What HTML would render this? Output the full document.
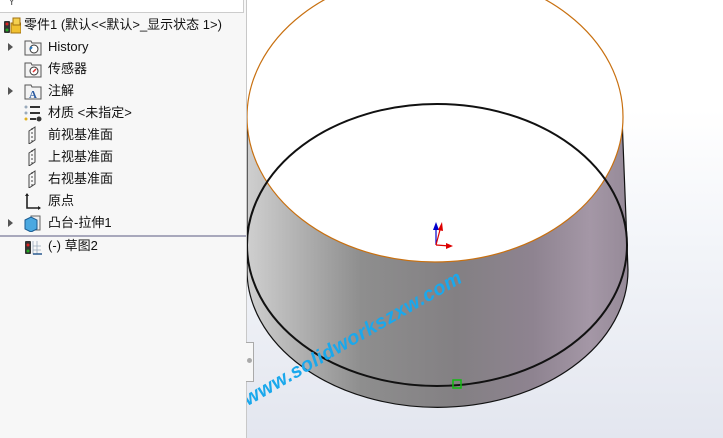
<!DOCTYPE html>
<html><head><meta charset="utf-8"><style>
html,body{margin:0;padding:0;width:723px;height:438px;overflow:hidden;background:#fff}
#panel{position:absolute;left:0;top:0;width:246px;height:438px;background:#f7f7f7;border-right:1px solid #c8c8c8;font-family:"Liberation Sans","Noto Sans CJK SC",sans-serif;font-size:13px;color:#111}
.row{position:absolute;left:0;height:20px;line-height:20px;white-space:nowrap}
.arr{position:absolute;left:8px;top:6px;width:0;height:0;border-left:5px solid #555;border-top:4px solid transparent;border-bottom:4px solid transparent}
.ic{position:absolute;left:24px;top:1px;width:18px;height:18px}
.tx{position:absolute;left:48px}
#filter{position:absolute;left:0;top:0;width:243px;height:12px;border-bottom:1px solid #ccc;border-right:1px solid #ccc;background:#fff}
#sep{position:absolute;left:0;top:235px;width:246px;height:2px;background:#a8a8bc}
#view{position:absolute;left:247px;top:0;width:476px;height:438px;background:linear-gradient(#ffffff 0%,#ffffff 25%,#f3f5f9 55%,#e3e6ef 100%)}
</style></head><body>
<div id="view"></div>
<svg style="position:absolute;left:0;top:0" width="723" height="438">
<defs><linearGradient id="g" x1="247" x2="628" y1="0" y2="0" gradientUnits="userSpaceOnUse">
<stop offset="0" stop-color="#cfcfcf"/><stop offset="0.3" stop-color="#8e8e8e"/><stop offset="0.55" stop-color="#838083"/><stop offset="0.75" stop-color="#8e8390"/><stop offset="0.9" stop-color="#a497a6"/><stop offset="1" stop-color="#968a98"/></linearGradient></defs>
<path d="M247,117 L247,270 A190,137 0 0 0 628,270 L622,117 A188,145 0 0 1 247,117 Z" fill="url(#g)" stroke="#111" stroke-width="1.2"/>
<ellipse cx="435" cy="117" rx="188" ry="145" fill="#fff" stroke="#c87010" stroke-width="1.2"/>
<ellipse cx="437" cy="245" rx="190" ry="141" fill="none" stroke="#111" stroke-width="2"/>
<rect x="453" y="380" width="8" height="8" fill="none" stroke="#1b1" stroke-width="1.5"/>
<line x1="436" y1="245" x2="436" y2="226" stroke="#00c" stroke-width="1.2"/><polygon points="433,230 436,222 439,230" fill="#00c"/>
<line x1="436" y1="245" x2="441" y2="226" stroke="#d00" stroke-width="1.2"/><polygon points="438,230 442,222 443,231" fill="#d00"/>
<line x1="436" y1="245" x2="450" y2="246" stroke="#d00" stroke-width="1.2"/><polygon points="446,243 453,246 446,249" fill="#d00"/>
<text x="0" y="0" transform="translate(248,406) rotate(-30)" font-family="Liberation Sans,sans-serif" font-weight="bold" font-style="italic" font-size="20" fill="#1aa8ec" letter-spacing="0.5">www.solidworkszxw.com</text>
</svg>
<div id="panel">
<div id="filter"><span style="position:absolute;left:8px;top:-4px;font-size:11px;color:#555">Y</span></div>
<div class="row" style="top:15px"><svg class="ic" style="left:3px;top:2px" width="20" height="18"><rect x="1" y="4" width="6" height="12" rx="1" fill="#333"/><circle cx="4" cy="7" r="1.5" fill="#d22"/><circle cx="4" cy="13" r="1.5" fill="#2a2"/><rect x="8" y="6" width="10" height="10" fill="#f0c030" stroke="#a07010"/><rect x="10" y="1" width="7" height="7" fill="#f5d050" stroke="#a07010"/></svg><span class="tx" style="left:24px">零件1 (默认&lt;&lt;默认&gt;_显示状态 1&gt;)</span></div>
<div class="row" style="top:37px"><div class="arr"></div><svg class="ic" width="18" height="18"><path d="M1,3h6l1,2h9v12H1Z" fill="#f3f3f3" stroke="#555"/><circle cx="10" cy="11" r="4" fill="#fff" stroke="#333"/><path d="M6,11l2,-2" stroke="#2a7ac0" stroke-width="2"/></svg><span class="tx">History</span></div>
<div class="row" style="top:59px"><svg class="ic" width="18" height="18"><path d="M1,3h6l1,2h9v12H1Z" fill="#f3f3f3" stroke="#555"/><circle cx="10" cy="11" r="4" fill="#fff" stroke="#333"/><path d="M9,12l3,-3" stroke="#d33" stroke-width="1.5"/></svg><span class="tx">传感器</span></div>
<div class="row" style="top:81px"><div class="arr"></div><svg class="ic" width="18" height="18"><path d="M1,3h6l1,2h9v12H1Z" fill="#f3f3f3" stroke="#555"/><text x="5" y="16" font-family="Liberation Serif" font-weight="bold" font-size="11" fill="#2a5aa0">A</text></svg><span class="tx">注解</span></div>
<div class="row" style="top:103px"><svg class="ic" width="18" height="18"><circle cx="2" cy="3" r="1.5" fill="#9ab"/><circle cx="2" cy="9" r="1.5" fill="#9ab"/><circle cx="2" cy="15" r="1.5" fill="#e0b020"/><path d="M6,3h10M6,9h10M6,15h6" stroke="#333" stroke-width="2"/><circle cx="15" cy="15" r="2.5" fill="#333"/></svg><span class="tx">材质 &lt;未指定&gt;</span></div>
<div class="row" style="top:125px"><svg class="ic" width="18" height="18"><path d="M5,5l6,-4v13l-6,4Z" fill="none" stroke="#444"/><path d="M8,2v15" stroke="#444" stroke-dasharray="2,2"/></svg><span class="tx">前视基准面</span></div>
<div class="row" style="top:147px"><svg class="ic" width="18" height="18"><path d="M5,5l6,-4v13l-6,4Z" fill="none" stroke="#444"/><path d="M8,2v15" stroke="#444" stroke-dasharray="2,2"/></svg><span class="tx">上视基准面</span></div>
<div class="row" style="top:169px"><svg class="ic" width="18" height="18"><path d="M5,5l6,-4v13l-6,4Z" fill="none" stroke="#444"/><path d="M8,2v15" stroke="#444" stroke-dasharray="2,2"/></svg><span class="tx">右视基准面</span></div>
<div class="row" style="top:191px"><svg class="ic" width="18" height="18"><path d="M3,2v14h13" fill="none" stroke="#222" stroke-width="1.6"/><path d="M1,4l2,-3l2,3M14,14l3,2l-3,2" fill="#222"/></svg><span class="tx">原点</span></div>
<div class="row" style="top:213px"><div class="arr"></div><svg class="ic" width="18" height="18"><rect x="7" y="2" width="9" height="14" fill="#eee" stroke="#666"/><path d="M1,6l6,-3l6,3v9l-6,3l-6,-3Z" fill="#4aa8e0" stroke="#1a5a90"/></svg><span class="tx">凸台-拉伸1</span></div>
<div id="sep"></div>
<div class="row" style="top:236px"><svg class="ic" width="18" height="18"><rect x="1" y="4" width="6" height="13" rx="1" fill="#333"/><circle cx="4" cy="8" r="1.5" fill="#d22"/><circle cx="4" cy="14" r="1.5" fill="#2a2"/><path d="M9,4v13h9M9,9h8M9,13h8M13,4v13" stroke="#9ab" stroke-width="0.8" fill="none"/><path d="M9,17h9" stroke="#2a5a90" stroke-width="1.5"/></svg><span class="tx">(-) 草图2</span></div>
</div>
<div style="position:absolute;left:246px;top:342px;width:7px;height:38px;border:1px solid #aaa;border-left:none;background:#f7f7f7"></div>
<div style="position:absolute;left:247px;top:358px;width:5px;height:5px;border-radius:50%;background:#aaa"></div>
</body></html>
